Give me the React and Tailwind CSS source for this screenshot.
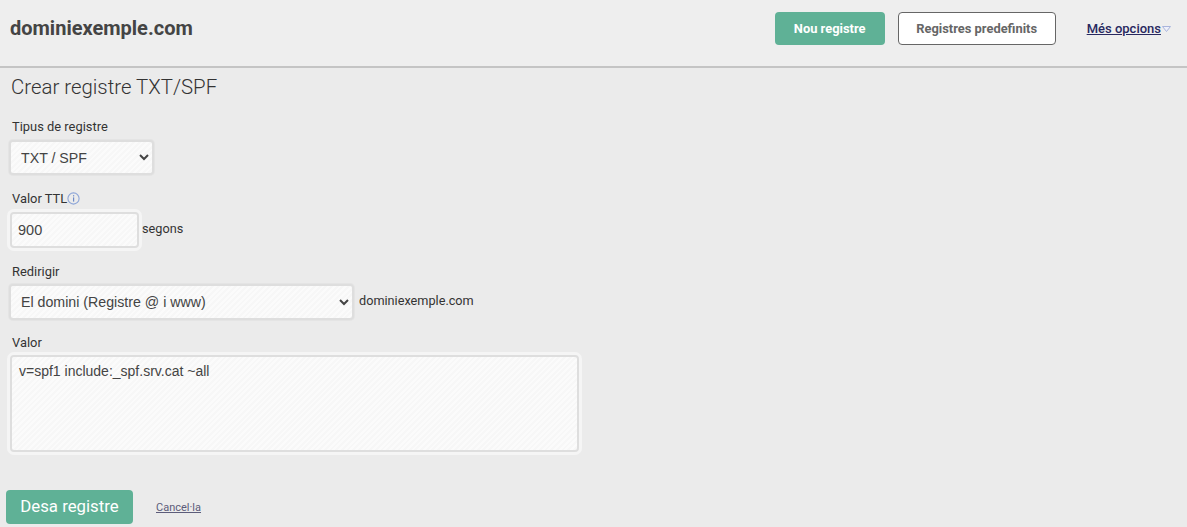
import React from "react";

// diagonal hatch shared by the form controls
const hatch =
  "rounded-[4px] border-2 border-[#dedede] text-[#444] outline-none font-['Liberation_Sans',sans-serif] bg-[#fafafa] bg-[repeating-linear-gradient(135deg,#fbfbfb_0px,#fbfbfb_2px,#f7f7f7_2px,#f7f7f7_4px)]";
const selectField = `${hatch} text-[14.2px] ring-1 ring-[#e4e4e4]`;
const inputField = `${hatch} text-[14.5px] ring-[3px] ring-[#f5f5f5]`;

const Label = ({ children }) => (
  <label className="flex h-[17px] items-center text-[12.9px] leading-[17px] text-[#333]">
    {children}
  </label>
);

const InfoIcon = () => (
  <svg width="13" height="13" viewBox="0 0 13 13" fill="none">
    <circle cx="6.5" cy="6.5" r="5.6" stroke="#8ea6d8" strokeWidth="1.1" />
    <rect x="6" y="5.4" width="1.2" height="4.2" fill="#6d8ac8" />
    <rect x="6" y="3.2" width="1.2" height="1.2" fill="#6d8ac8" />
  </svg>
);

export default function App() {
  return (
    <div className="h-[527px] w-[1187px] overflow-hidden bg-[#ebebeb] font-['Roboto',sans-serif]">
      <header className="flex h-[68px] items-start border-b-2 border-[#c4c4c4] bg-[#eeeeee] pl-[10px] pr-[16px] pt-[12px]">
        <h1 className="text-[20px] font-bold leading-[33px] text-[#444]">dominiexemple.com</h1>
        <div className="ml-auto flex items-center">
          <button className="h-[33px] w-[110px] rounded-[4px] bg-[#5fb196] text-[12.9px] font-bold text-white">
            Nou registre
          </button>
          <button className="ml-[13px] h-[33px] w-[158px] rounded-[4px] border border-[#666] bg-white text-[12.9px] font-bold text-[#666]">
            Registres predefinits
          </button>
          <a className="ml-[31px] flex items-center text-[13px] font-medium text-[#28285f] underline">
            Més opcions
            <svg width="9" height="6" viewBox="0 0 9 6" className="ml-px">
              <path d="M0.5 0.5H8.5L4.5 5.5Z" fill="#eef0fa" stroke="#a9b4dc" strokeWidth="1" />
            </svg>
          </a>
        </div>
      </header>

      <main className="pl-[10px]">
        <h2 className="mt-[5px] pl-px text-[20.4px] font-light leading-[28px] text-[#333]">
          Crear registre TXT/SPF
        </h2>

        <div className="mt-[17px] flex flex-col items-start">
          <div className="pl-[2px]">
            <Label>Tipus de registre</Label>
          </div>
          <select className={`-ml-px mt-[5px] h-[35px] w-[145px] pl-[6px] ${selectField}`} defaultValue="txt">
            <option value="txt">TXT / SPF</option>
          </select>

          <div className="mt-[15px] flex items-center pl-[2px]">
            <Label>Valor TTL</Label>
            <InfoIcon />
          </div>
          <div className="mt-[5px] flex items-center">
            <input className={`h-[36px] w-[129px] pl-[6px] ${inputField}`} defaultValue="900" />
            <span className="ml-[3px] -mt-[3px] text-[12.7px] text-[#333]">segons</span>
          </div>

          <div className="mt-[15px] pl-[2px]">
            <Label>Redirigir</Label>
          </div>
          <div className="-ml-px mt-[4px] flex items-center">
            <select className={`h-[36px] w-[345px] pl-[6px] ${selectField}`} defaultValue="d">
              <option value="d">El domini (Registre @ i www)</option>
            </select>
            <span className="ml-[5px] -mt-[3px] text-[12.7px] text-[#333]">dominiexemple.com</span>
          </div>

          <div className="mt-[14px] pl-[2px]">
            <Label>Valor</Label>
          </div>
          <textarea
            className={`mt-[4px] h-[97px] w-[569px] resize-none px-[7px] py-[5px] text-[14px] leading-[18px] ${inputField}`}
            defaultValue="v=spf1 include:_spf.srv.cat ~all"
          />
        </div>

        <div className="-ml-[4px] mt-[38px] flex items-center">
          <button className="h-[34px] w-[127px] rounded-[4px] bg-[#5fb196] text-[16.8px] font-normal text-white">
            Desa registre
          </button>
          <a className="ml-[23px] mt-[2px] text-[11px] text-[#5c5c7a] underline">Cancel·la</a>
        </div>
      </main>
    </div>
  );
}
